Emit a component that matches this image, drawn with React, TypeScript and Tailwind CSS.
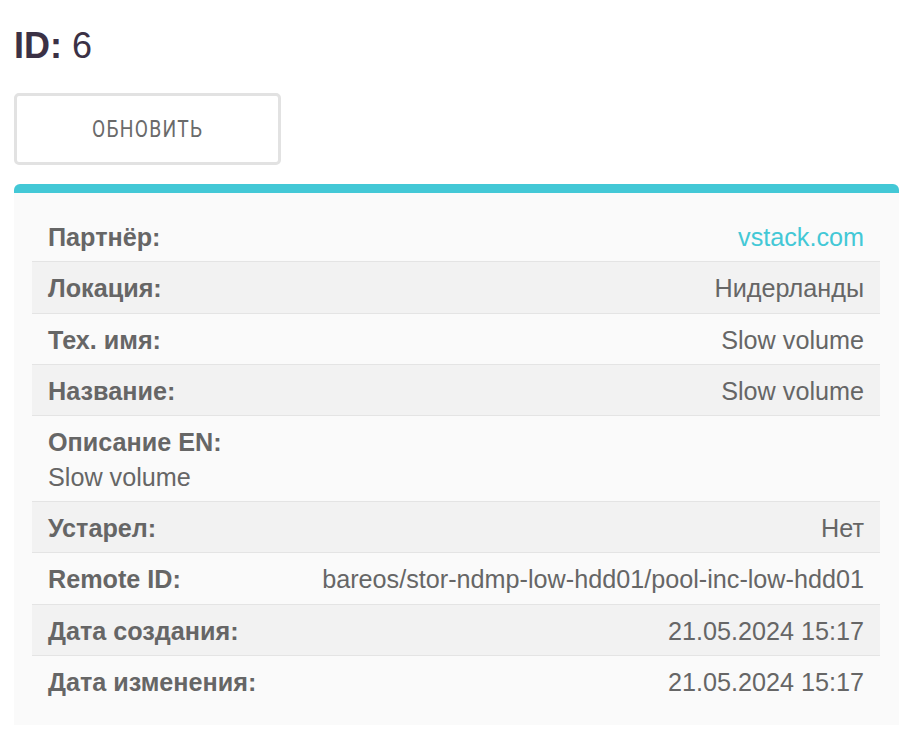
const rows: { label: string; value: string; link?: boolean; block?: boolean }[] = [
  { label: 'Партнёр:', value: 'vstack.com', link: true },
  { label: 'Локация:', value: 'Нидерланды' },
  { label: 'Тех. имя:', value: 'Slow volume' },
  { label: 'Название:', value: 'Slow volume' },
  { label: 'Описание EN:', value: 'Slow volume', block: true },
  { label: 'Устарел:', value: 'Нет' },
  { label: 'Remote ID:', value: 'bareos/stor-ndmp-low-hdd01/pool-inc-low-hdd01' },
  { label: 'Дата создания:', value: '21.05.2024 15:17' },
  { label: 'Дата изменения:', value: '21.05.2024 15:17' },
]

export default function App() {
  return (
    <div className="min-h-screen bg-white px-[14px] pt-[24px] font-['Liberation_Sans',Arial,sans-serif] text-[#666]">
      <h1 className="text-[36px] leading-[44px] text-[#3b3145]">
        <span className="font-bold">ID:</span> 6
      </h1>

      <button className="mt-[25px] flex h-[72px] w-[267px] items-center justify-center rounded-[5px] border-[3px] border-[#e2e2e2] bg-white">
        <span className="inline-block scale-x-[0.8] font-['Roboto',sans-serif] text-[24px] tracking-[1.6px] text-[#6a6a6a]">
          ОБНОВИТЬ
        </span>
      </button>

      <div className="mt-[19px] w-[885px] rounded-t-[6px] border-t-[9px] border-[#43c8d6] bg-[#fafafa] pb-[19px] pl-[18px] pr-[19px] pt-[18px]">
        {rows.map((r, i) => (
          <div
            key={r.label}
            className={
              (i % 2 === 1 ? 'bg-[#f2f2f2] ' : '') +
              (i < rows.length - 1 ? 'border-b border-[#e4e4e4] ' : '') +
              (r.block ? 'block' : 'flex justify-between') +
              ' px-[16px] pb-[9px] pt-[11px] text-[25.2px] leading-[30.33px]'
            }
          >
            <div className={'font-bold' + (r.block ? ' mb-[4px]' : '')}>{r.label}</div>
            <div className={r.link ? 'text-[#43c8d6]' : ''}>{r.value}</div>
          </div>
        ))}
      </div>
    </div>
  )
}
